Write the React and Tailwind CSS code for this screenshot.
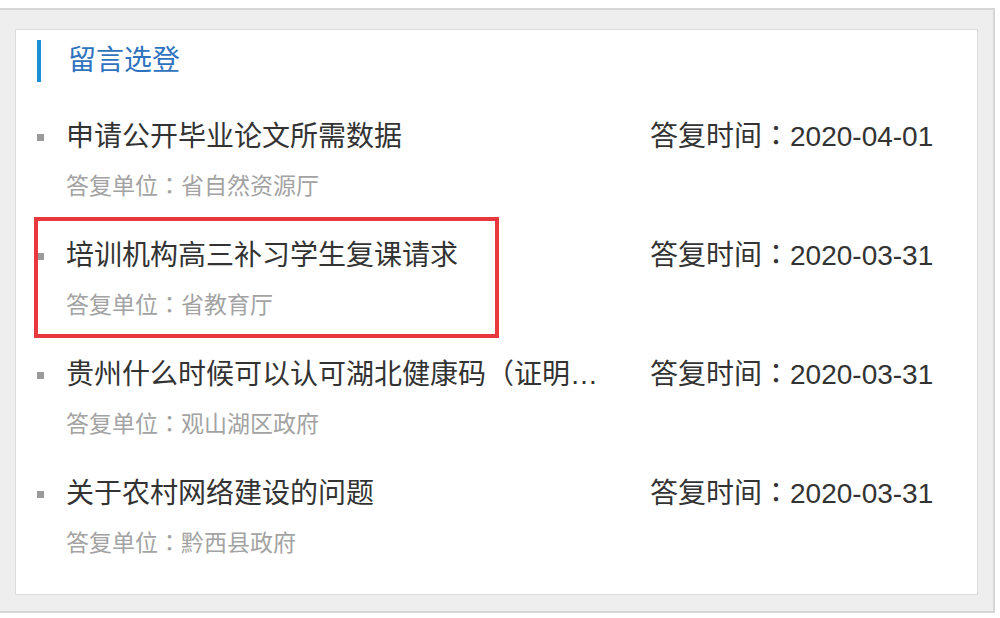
const FONT = "font-['Liberation_Sans','Noto_Sans_CJK_SC',sans-serif]";

const messages = [
  { id: 1, title: "申请公开毕业论文所需数据", unit: "省自然资源厅", date: "2020-04-01" },
  { id: 2, title: "培训机构高三补习学生复课请求", unit: "省教育厅", date: "2020-03-31", marked: true },
  { id: 3, title: "贵州什么时候可以认可湖北健康码（证明材料）", unit: "观山湖区政府", date: "2020-03-31" },
  { id: 4, title: "关于农村网络建设的问题", unit: "黔西县政府", date: "2020-03-31" }
];

// centred full-width colon, as in the original rendering
const Colon = () => (
  <span className="font-['Noto_Sans_CJK_TC',sans-serif] leading-none">：</span>
);

const MessageRow = ({ item }) => (
  <li className="relative pb-[34px]">
    <div className="flex items-center h-10">
      <span className="w-[7px] h-[7px] bg-[#9a9a9a] shrink-0" />
      <p className="ml-[22px] w-[545px] h-10 truncate text-[28px] leading-10 text-[#333]">
        {item.title}
      </p>
      <p className="ml-[39px] h-10 whitespace-nowrap text-[28px] leading-10 text-[#333]">
        答复时间<Colon />{item.date}
      </p>
    </div>
    <p className="mt-[13px] ml-[29px] h-8 text-[23px] leading-8 text-[#a3a3a3]">
      答复单位<Colon />{item.unit}
    </p>
    {item.marked ? (
      <div className="absolute left-[-3px] top-[-19px] w-[465px] h-[121px] border-4 border-[#e8383d] pointer-events-none" />
    ) : null}
  </li>
);

export default function App() {
  return (
    <div className={`${FONT} bg-white w-[1000px] h-[618px] pt-2`}>
      <div className="w-[995px] h-[605px] bg-[#eeeeee] border-y-2 border-r-2 border-[#d6d6d6] pt-[19px] px-[15px]">
        <section className="bg-white border border-[#dcdcdc] h-[566px] pt-[10px] pl-[21px]">
          <div className="flex items-center h-[42px]">
            <span className="w-1 h-[42px] bg-[#1a90d5]" />
            <h2 className="ml-[27px] text-[28px] leading-none text-[#2f73bf]">留言选登</h2>
          </div>
          <ul className="mt-[35px]">
            {messages.map((item) => (
              <MessageRow item={item} key={item.id} />
            ))}
          </ul>
        </section>
      </div>
    </div>
  );
}
